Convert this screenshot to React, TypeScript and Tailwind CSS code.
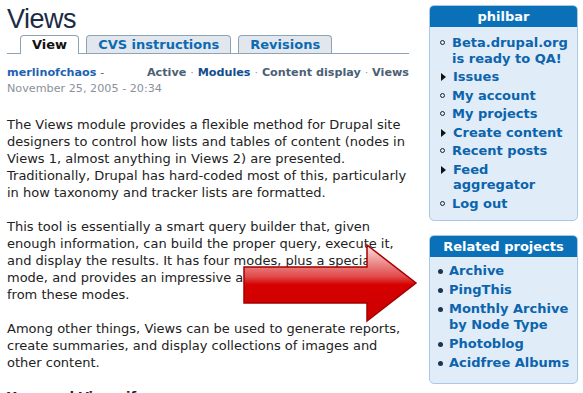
import React from "react";

const font = { fontFamily: '"DejaVu Sans", Verdana, sans-serif' };

function Arrow() {
    return (
        <svg className="absolute left-[238px] top-[240px]" width="185" height="86" viewBox="238 240 185 86">
            <defs>
                <linearGradient id="shine" x1="0" y1="0" x2="0" y2="1">
                    <stop offset="0" stopColor="#fbe3e3" />
                    <stop offset="0.42" stopColor="#e04848" />
                    <stop offset="0.52" stopColor="#d60000" />
                    <stop offset="1" stopColor="#cc0000" />
                </linearGradient>
            </defs>
            <polygon
                points="244,267 367,267 367,245 416,283 367,321 367,303 244,303"
                fill="url(#shine)"
                stroke="#a30000"
                strokeWidth="1.5"
            />
        </svg>
    );
}

function Tab({ label, active }: { label: string; active?: boolean }) {
    return (
        <div
            className={
                active
                    ? "h-[19px] px-[11px] rounded-t-[4px] border border-b-0 border-[#8fa3b6] bg-white text-[13px] font-bold leading-[18px] text-[#111] -mb-px"
                    : "h-[18px] px-[11px] rounded-t-[4px] border border-b-0 border-[#8fa3b6] bg-[#e2e7ed] text-[13px] font-bold leading-[18px] text-[#0b6ab3]"
            }
        >
            {label}
        </div>
    );
}

function Bullet({ kind }: { kind: string }) {
    if (kind === "leaf") return <span className="mt-[5px] w-[5px] h-[5px] rounded-full border border-[#222] shrink-0" />;
    if (kind === "collapsed")
        return <span className="mt-[4px] ml-[1px] w-0 h-0 border-y-[4px] border-y-transparent border-l-[5px] border-l-[#111] shrink-0" />;
    return <span className="mt-[6px] w-[5px] h-[5px] rounded-full bg-[#1c3550] shrink-0" />;
}

function Block({
    title,
    items,
    kindOf,
    listClass,
    itemClass,
    lineClass,
}: {
    title: string;
    items: string[][];
    kindOf: (i: number) => string;
    listClass: string;
    itemClass: string;
    lineClass: string;
}) {
    return (
        <div className="rounded-[5px] border border-[#a9c9e4] bg-[#e0ecf7] overflow-hidden">
            <div className="h-[21px] bg-[#0a71b9] text-white text-[13px] font-bold leading-[21px] text-center">{title}</div>
            <ul className={listClass}>
                {items.map((lines, i) => (
                    <li key={i} className={itemClass}>
                        <Bullet kind={kindOf(i)} />
                        <span className={lineClass}>
                            {lines.map((l, j) => (
                                <span key={j} className="block">{l}</span>
                            ))}
                        </span>
                    </li>
                ))}
            </ul>
        </div>
    );
}

export default function App() {
    const userItems = [
        ["Beta.drupal.org", "is ready to QA!"],
        ["Issues"],
        ["My account"],
        ["My projects"],
        ["Create content"],
        ["Recent posts"],
        ["Feed", "aggregator"],
        ["Log out"],
    ];
    const collapsed = [1, 4, 6];
    const related = [["Archive"], ["PingThis"], ["Monthly Archive", "by Node Type"], ["Photoblog"], ["Acidfree Albums"]];

    return (
        <div className="relative w-[583px] h-[393px] overflow-hidden bg-white flex" style={font}>
            <div className="w-[409px] pl-[7px] shrink-0">
                <h1
                    className="mt-[3px] text-[27px] leading-[32px] tracking-[-0.5px] text-[#1a2b44]"
                    style={{ fontFamily: '"Liberation Sans", Arial, sans-serif' }}
                >
                    Views
                </h1>
                <div className="flex gap-[7px] pl-[13px] border-b border-[#8fa3b6] items-end">
                    <Tab label="View" active />
                    <Tab label="CVS instructions" />
                    <Tab label="Revisions" />
                </div>
                <div className="flex justify-between mt-[11px] text-[11.2px] leading-[16px]">
                    <span className="font-bold text-[#1d63b0]">
                        merlinofchaos <span className="font-normal text-[#666]">-</span>
                    </span>
                    <span className="font-bold text-[#4c6075]">
                        Active <span className="font-normal text-[#999]">·</span>{" "}
                        <span className="text-[#124e8c]">Modules</span> <span className="font-normal text-[#999]">·</span>{" "}
                        Content display <span className="font-normal text-[#999]">·</span> Views
                    </span>
                </div>
                <div className="text-[11.2px] leading-[16px] text-[#8a919a]">November 25, 2005 - 20:34</div>

                <div className="mt-[19px] text-[13px] leading-[17px] text-[#222] flex flex-col gap-[17px]">
                    <p>
                        The Views module provides a flexible method for Drupal site<br />
                        designers to control how lists and tables of content (nodes in<br />
                        Views 1, almost anything in Views 2) are presented.<br />
                        Traditionally, Drupal has hard-coded most of this, particularly<br />
                        in how taxonomy and tracker lists are formatted.
                    </p>
                    <p>
                        This tool is essentially a smart query builder that, given<br />
                        enough information, can build the proper query, execute it,<br />
                        and display the results. It has four modes, plus a special<br />
                        mode, and provides an impressive amount of functionality<br />
                        from these modes.
                    </p>
                    <p>
                        Among other things, Views can be used to generate reports,<br />
                        create summaries, and display collections of images and<br />
                        other content.
                    </p>
                    <p className="font-bold">You need Views if:</p>
                </div>
            </div>

            <div className="ml-[20px] w-[149px] pt-[5px] flex flex-col gap-[14px]">
                <Block
                    title="philbar"
                    items={userItems}
                    kindOf={(i) => (collapsed.includes(i) ? "collapsed" : "leaf")}
                    listClass="pt-[8px] pb-[9px]"
                    itemClass="flex gap-[7px] pl-[10px] mb-[3px] last:mb-0"
                    lineClass="text-[13px] font-bold leading-[15.5px] text-[#0b64ad]"
                />
                <Block
                    title="Related projects"
                    items={related}
                    kindOf={() => "disc"}
                    listClass="pt-[6px] pb-[12px]"
                    itemClass="flex gap-[6px] pl-[8px] mb-[3px] last:mb-0"
                    lineClass="text-[13px] font-bold leading-[16px] text-[#0b64ad]"
                />
            </div>

            <Arrow />
        </div>
    );
}
